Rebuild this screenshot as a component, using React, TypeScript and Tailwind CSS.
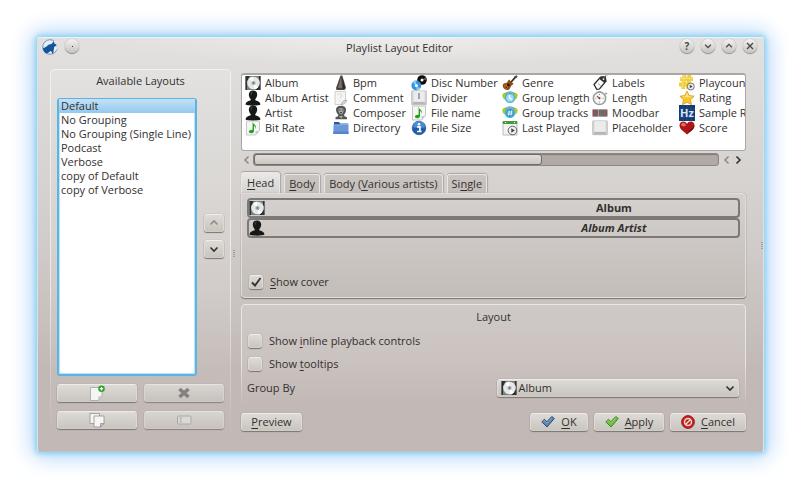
import { useState } from 'react';
import type { ReactNode } from 'react';

const layouts = ['Default', 'No Grouping', 'No Grouping (Single Line)', 'Podcast', 'Verbose', 'copy of Default', 'copy of Verbose'];

const raised = 'rounded-[3px] border border-t-[#efedeb] border-x-[#dedad7] border-b-[#d0ccc7] bg-linear-to-b from-[#dedbd7] to-[#c9c5bf] shadow-[0_1px_1px_#7b7572,0_0_1px_#8f8986]';

function Album() {
  return (
    <svg className="size-4 shrink-0" viewBox="0 0 16 16">
      <rect x=".5" y="1" width="15" height="14" fill="#7a8083" />
      <path d="M.5 1h4L2 7v8H.5zM15.500 15h-5l3.500-6V1h1.500z" fill="#2c3133" />
      <circle cx="8.500" cy="8" r="6.300" fill="#e6e7e7" />
      <path d="M8.500 8 4 3.600A6.200 6.200 0 0 1 8 1.800zM8.500 8l4.500 4.400a6 6 0 0 1-4 1.800z" fill="#fff" />
      <circle cx="8.500" cy="8" r="2.200" fill="#b4b8ba" />
      <circle cx="8.500" cy="8" r="1" fill="#6e7476" />
    </svg>
  );
}

function Person() {
  return (
    <svg className="size-4 shrink-0" viewBox="0 0 16 16">
      <path d="M8 .5c2.600 0 4.200 1.700 4.200 4 0 1.800-.8 3.600-1.900 4.500v1.300c1.500.6 4.800 1.200 5.200 4.200-2 1.500-13 1.500-15 0 .4-3 3.700-3.600 5.200-4.200V9C4.600 8.100 3.800 6.300 3.800 4.500c0-2.300 1.600-4 4.200-4z" fill="#161717" />
      <path d="M5.500 4c.2-1.600 1.200-2.300 2.600-2.300-1.300.7-1.800 2-1.600 4z" fill="#4b4e4f" />
    </svg>
  );
}

function NotePage() {
  return (
    <svg className="size-4 shrink-0" viewBox="0 0 16 16">
      <path d="M1.500 1h13v9.500L10.500 15h-9z" fill="#f6f6f5" stroke="#b9b9b7" strokeWidth=".8" />
      <path d="M10.500 15c.4-1.600.3-2.800 0-4 1.200.3 2.500.2 4-.5z" fill="#c5c5c3" />
      <path d="M7.600 1.800c.5 2.600 4.200 3.300 3.300 7-.3-1.700-1.100-2.500-1.900-2.800v5c0 2.900-5.400 3-5 .6.200-1.500 2.100-2.300 3.600-1.700z" fill="#1fa51c" />
    </svg>
  );
}

function Metronome() {
  return (
    <svg className="size-4 shrink-0" viewBox="0 0 16 16">
      <path d="M7.500.5h1.800L13 13l-1.500 2h-8L3 13z" fill="#4d4440" />
      <path d="M8 2 5 13h4z" fill="#77706c" />
      <path d="M9.500 3 12 13l-2 1z" fill="#2a2422" />
    </svg>
  );
}

function Comment() {
  return (
    <svg className="size-4 shrink-0" viewBox="0 0 16 16">
      <path d="M2 1.500h10.500v8L9 14.500H2z" fill="#f5f5f4" stroke="#c5c5c3" strokeWidth=".8" />
      <path d="M5 5c.5-1.500 3.800-1.500 3.800.4 0 1.300-1.800 1.500-1.800 3M7 10v1.200" fill="none" stroke="#dededd" strokeWidth="1.300" />
      <path d="M8.500 14.500c.6-2 1.500-4 5-4.500-.5 2.600-2 4.200-5 4.500z" fill="#e8e8e7" stroke="#8b8b89" strokeWidth=".7" />
    </svg>
  );
}

function Composer() {
  return (
    <svg className="size-4 shrink-0" viewBox="0 0 16 16">
      <path d="M3 4.500C3 2 5 .7 8 .7s5 1.500 5 4c0 2-.8 4-2 5l.5 1.500 2.500 1v2H2.500v-2l2.500-1 .3-1.500C4 8.500 3 6.500 3 4.500z" fill="#555756" />
      <path d="M5.500 4C7 2.500 10 3 10.500 4.500c.3 2.500-.7 4.200-2.300 5C6.500 9 5 7 5.500 4z" fill="#a4a7a6" />
      <path d="M6 5h1.500M8.700 5H10M7 7.500h2" stroke="#3e403f" strokeWidth=".9" />
      <path d="M6 11h4l-1.500 2.500z" fill="#a9abaa" />
    </svg>
  );
}

function Folder() {
  return (
    <svg className="size-4 shrink-0" viewBox="0 0 16 16">
      <path d="M1 2h5l1 1.500h8V7H1z" fill="#2c5a9f" />
      <path d="M.5 4.800H7L8 4h7.500v10H.3z" fill="#6a98d9" />
      <path d="M.3 11.500h15.200V14H.3z" fill="#5584c9" />
      <path d="M.5 5H7l1-.8h7.500" fill="none" stroke="#a4c4ee" strokeWidth=".8" />
    </svg>
  );
}

function Discs() {
  return (
    <svg className="size-4 shrink-0" viewBox="0 0 16 16">
      <circle cx="11" cy="5" r="4.800" fill="#0b0c0d" />
      <path d="M11 5 14.500 2A4.800 4.800 0 0 1 15.700 5z" fill="#55585a" />
      <circle cx="11" cy="5" r="1.500" fill="#fff" />
      <circle cx="5.300" cy="10.500" r="4.900" fill="#3594e0" />
      <path d="M5.300 10.500 1.500 7.400A4.900 4.900 0 0 1 5 5.600zM5.300 10.500l3.900 3a4.900 4.900 0 0 1-3.500 1.900z" fill="#86c7f7" />
      <circle cx="5.300" cy="10.500" r="1.500" fill="#fff" />
    </svg>
  );
}

function Key({ divider }: { divider?: boolean }) {
  return (
    <svg className="size-4 shrink-0" viewBox="0 0 16 16">
      <rect x=".5" y=".8" width="15" height="14" rx=".5" fill="#cfd1d1" stroke="#b9bbbb" strokeWidth=".6" />
      <rect x="2.300" y="1.300" width="11.400" height="10.500" rx=".5" fill="#ebecec" />
      <path d="M1 14.500 3 12h10l2 2.500z" fill="#b4b6b6" />
      {divider && <path d="M8 3v6" stroke="#747777" strokeWidth="1.200" />}
    </svg>
  );
}

function Info() {
  return (
    <svg className="size-4 shrink-0" viewBox="0 0 16 16">
      <circle cx="8" cy="8" r="6.800" fill="#1c5fad" stroke="#164a8a" strokeWidth=".6" />
      <path d="M2 7a6 6 0 0 1 12 0C11 8.500 5 8.500 2 7z" fill="#4b8dd4" />
      <path d="M6.200 6.800h2.700v4.500M6 11.500h4.600" fill="none" stroke="#fff" strokeWidth="1.700" />
      <circle cx="8" cy="4.300" r="1.300" fill="#fff" />
    </svg>
  );
}

function Guitar() {
  return (
    <svg className="size-4 shrink-0" viewBox="0 0 16 16">
      <path d="M7 9.500 13.500 2" stroke="#2f2620" strokeWidth="1.700" />
      <path d="m12 1.700 2.500-1.500 1.200 1.300-1.900 2.200z" fill="#5a4839" />
      <path d="M1 9.500C2 7.500 4 8.500 5 7.500s1.200-3 3-2.700C8 6.500 9.500 8 11.500 8c0 1.800-2 2-2.500 3.300-.6 1.700-1.500 3.700-4 3.700C2 15 0 12 1 9.500z" fill="#8b4c16" />
      <path d="M2 10c1.500-1.500 3-.5 4.300-2.400l1 2.900-2 3.500C3 14 2 12 2 10z" fill="#b06a20" />
      <circle cx="6.300" cy="10" r="1.400" fill="#23150b" />
      <path d="m3.500 11.500 1.500 1.700" stroke="#2d1a0b" />
    </svg>
  );
}

function Group({ tracks }: { tracks?: boolean }) {
  return (
    <svg className="size-4 shrink-0" viewBox="0 0 16 16">
      <path d="M.3 5.500C.3 3 3 2 5 2.500v8C2.500 10 .3 8 .3 5.500z" fill="#a7cd25" />
      <path d="M15.700 5.500c0-2.500-2.700-3.500-4.700-3v8c2.500-.5 4.700-2.500 4.700-5z" fill="#bfc327" />
      <circle cx="8" cy="7.800" r="5.300" fill="#4eb3df" />
      <circle cx="8" cy="8" r="3.700" fill={tracks ? '#2991c4' : '#a4dcf3'} />
      {tracks
        ? <path d="M7.300 5.500 6.500 10.500M9.700 5.500l-.8 5M5.500 7h5.300M5.200 9h5.300" stroke="#eefaff" strokeWidth=".9" />
        : <path d="M7.500 5v3l2.500 1.500" fill="none" stroke="#fff" strokeWidth="1.200" />}
      <path d="M4 3.500c1-2 7-2 8 0" fill="none" stroke="#2e86a8" />
    </svg>
  );
}

function LastPlayed() {
  return (
    <svg className="size-4 shrink-0" viewBox="0 0 16 16">
      <path d="M1 1.500h14V15H1z" fill="#f2f3f1" stroke="#a9aca8" strokeWidth=".8" />
      <path d="M.8 1h14.400v3H.8z" fill="#429843" />
      <path d="M3 2.500h1M12 2.500h1" stroke="#fff" />
      <circle cx="10.500" cy="10.500" r="4.300" fill="#efefed" stroke="#5e625f" />
      <path d="m9.300 8.300 3.500 2.200-3.500 2.200z" fill="#3e423f" />
    </svg>
  );
}

function Tag() {
  return (
    <svg className="size-4 shrink-0" viewBox="0 0 16 16">
      <path d="M2 9.500 8.500 2l4.700-.3L14 6l-6.500 8-2.700.4z" fill="#fafafa" stroke="#252727" strokeWidth="1.200" />
      <path d="m8.500 2 4.700-.5L14.200 6 12.500 8 7.300 4z" fill="#303333" />
      <circle cx="11.500" cy="4" r=".9" fill="#fff" />
      <path d="M11.500 4C12 1 14 0 15.500 1M6 8.500l2.500 2" fill="none" stroke="#8d908f" strokeWidth=".8" />
    </svg>
  );
}

function Stopwatch() {
  return (
    <svg className="size-4 shrink-0" viewBox="0 0 16 16">
      <path d="M6 1h3v2H6zM12.500 3.500l1.500-1.300 1.400 1.600L14 5z" fill="#a6a8a8" />
      <circle cx="7.500" cy="8.300" r="6.200" fill="#f6f6f6" stroke="#9b9d9d" strokeWidth="1.500" />
      <path d="M7.500 8.300 5 6" stroke="#c53a31" strokeWidth="1.100" />
      <path d="M7.500 4v1M7.500 11.600v1M3.300 8.300h1M10.700 8.300h1" stroke="#777" strokeWidth=".8" />
      <circle cx="7.500" cy="8.300" r="1" fill="#444" />
    </svg>
  );
}

function Moodbar() {
  return (
    <svg className="size-4 shrink-0" viewBox="0 0 16 16">
      <path d="M.5 4.500h15v7H.5z" fill="#6e6465" />
      <path d="M1.500 4.500v7M4 4.500v7" stroke="#9b4a4e" strokeWidth="1.200" />
      <path d="M6.500 4.500v7" stroke="#bf9794" />
      <path d="M8.700 4.500v7M11 4.500v7" stroke="#607b79" strokeWidth="1.200" />
      <path d="M13.300 4.500v7" stroke="#c34951" strokeWidth="1.300" />
    </svg>
  );
}

function Playcount() {
  return (
    <svg className="size-4 shrink-0" viewBox="0 0 16 16">
      <path d="M5.500 0 4 14M10.500 0 9 14M1 4.200h13M0 9.500h12" stroke="#f3cd3c" strokeWidth="3.800" />
      <path d="M5 0 3.500 13M1 3.500h12" stroke="#f9e074" />
      <circle cx="11.800" cy="11.500" r="3.500" fill="#ececea" stroke="#737573" />
      <path d="m10.800 9.700 2.800 1.800-2.800 1.800z" fill="#444" />
    </svg>
  );
}

function Star() {
  return (
    <svg className="size-4 shrink-0" viewBox="0 0 16 16">
      <path d="m8 1 2.200 4.600 5 .6-3.700 3.500 1 5L8 12.300l-4.500 2.400 1-5L.8 6.200l5-.6z" fill="#f7c52c" stroke="#d99a1b" strokeWidth=".8" strokeLinejoin="round" />
      <path d="m8 2.500 1.600 3.800 4 .5C10 7.500 6 7.500 2.500 6.800l4-.5z" fill="#fde681" />
    </svg>
  );
}

function Hertz() {
  return (
    <svg className="size-4 shrink-0" viewBox="0 0 16 16">
      <path d="M0 0h16v16H0z" fill="#143a70" />
      <path d="M0 4h16M0 8h16M0 12h16M4 0v16M8 0v16M12 0v16" stroke="#2c5a96" strokeWidth=".5" />
      <text x="8" y="12" textAnchor="middle" fontSize="11" fontWeight="700" fill="#d5e6fa">Hz</text>
    </svg>
  );
}

function Heart() {
  return (
    <svg className="size-4 shrink-0" viewBox="0 0 16 16">
      <path d="M8 14.500C5.500 12 .5 9.500.5 5.500.5 1 6 .3 8 4c2-3.700 7.500-3 7.500 1.500 0 4-5 6.500-7.500 9z" fill="#ae1516" />
      <path d="M2 5c.2-3 4-3.200 5 .2C5.500 6.700 3.500 7 2 5z" fill="#e16a62" />
      <path d="M8 14.500c2.500-2.500 7.500-5 7.500-9C13 9 10 10 8 14.500z" fill="#76090b" />
    </svg>
  );
}

const tokens: [string, ReactNode][] = [
  ['Album', <Album />], ['Album Artist', <Person />], ['Artist', <Person />], ['Bit Rate', <NotePage />],
  ['Bpm', <Metronome />], ['Comment', <Comment />], ['Composer', <Composer />], ['Directory', <Folder />],
  ['Disc Number', <Discs />], ['Divider', <Key divider />], ['File name', <NotePage />], ['File Size', <Info />],
  ['Genre', <Guitar />], ['Group length', <Group />], ['Group tracks', <Group tracks />], ['Last Played', <LastPlayed />],
  ['Labels', <Tag />], ['Length', <Stopwatch />], ['Moodbar', <Moodbar />], ['Placeholder', <Key />],
  ['Playcount', <Playcount />], ['Rating', <Star />], ['Sample Rate', <Hertz />], ['Score', <Heart />],
];

const tabs: [string, ReactNode][] = [
  ['head', <><Accel>H</Accel>ead</>],
  ['body', <><Accel>B</Accel>ody</>],
  ['various', <>Body (<Accel>V</Accel>arious artists)</>],
  ['single', <>Si<Accel>n</Accel>gle</>],
];

// underlined accelerator letter
function Accel({ children }: { children: ReactNode }) {
  return <span className="underline decoration-[#33302e] decoration-1 underline-offset-2 [text-decoration-skip-ink:none]">{children}</span>;
}

function Chevron({ dir, className }: { dir: 'up' | 'down' | 'left' | 'right'; className?: string }) {
  const paths = { up: 'M1.500 6.500 5 3l3.500 3.500', down: 'M1.500 3.500 5 7l3.500-3.500', left: 'M6.500 1.500 3 5l3.500 3.500', right: 'M3.500 1.500 7 5 3.500 8.500' };
  return (
    <svg className={className ?? 'size-[10px]'} viewBox="0 0 10 10" fill="none" stroke="currentColor" strokeWidth="1.600">
      <path d={paths[dir]} />
    </svg>
  );
}

function Frame({ className, children }: { className: string; children: ReactNode }) {
  return (
    <section className={`relative ${className}`}>
      <div className="pointer-events-none absolute inset-0 rounded-t-[4px] border border-b-0 border-white/55 bg-white/12 shadow-[0_0_1px_1px_#00000030] mask-b-from-60%" />
      {children}
    </section>
  );
}

function TitleButton({ label, children }: { label: string; children?: ReactNode }) {
  return (
    <button aria-label={label} className="flex size-[14px] items-center justify-center rounded-full bg-linear-to-b from-[#f4f3f2] to-[#c6c3bf] text-[#4a4846] shadow-[0_1px_1px_#8d8985,0_0_1px_#8d8985]">
      {children}
    </button>
  );
}

function Check({ checked, children }: { checked?: boolean; children: ReactNode }) {
  return (
    <label className="flex items-center gap-[6px]">
      <span className="grid size-4 place-items-center *:col-start-1 *:row-start-1">
        <input type="checkbox" defaultChecked={checked} className={`peer size-[14px] appearance-none ${raised}`} />
        <svg className="pointer-events-none hidden size-[14px] peer-checked:block" viewBox="0 0 14 14" fill="none" stroke="#33312f" strokeWidth="1.800">
          <path d="m3 7.500 3 3L11.500 3" />
        </svg>
      </span>
      {children}
    </label>
  );
}

function DialogButton({ icon, className, children }: { icon?: ReactNode; className: string; children: ReactNode }) {
  return (
    <button className={`flex h-[18px] items-center justify-center ${raised} ${className}`}>
      {icon}
      <span>{children}</span>
    </button>
  );
}

function Tick({ fill, stroke }: { fill: string; stroke: string }) {
  return (
    <svg className="size-[14px]" viewBox="0 0 14 14">
      <path d="M.8 6.800 3.500 4.300l2.300 2.500 5-5.300 2.500 2L6 12z" fill={fill} stroke={stroke} strokeWidth="1" strokeLinejoin="round" />
      <path d="m2 6.700 1.500-1.200L5.800 8l5-5.200" fill="none" stroke="#ffffff40" />
    </svg>
  );
}

function Grip() {
  return (
    <div className="flex flex-col gap-px">
      <span className="h-px w-[2px] bg-[#a19c99]" />
      <span className="h-px w-[2px] bg-[#a19c99]" />
      <span className="h-px w-[2px] bg-[#a19c99]" />
      <span className="h-px w-[2px] bg-[#a19c99]" />
    </div>
  );
}

export default function App() {
  const [layout, setLayout] = useState('Default');
  const [tab, setTab] = useState('head');

  return (
    <main className="min-h-screen bg-white p-[37px] pr-9 font-['Open_Sans','Noto_Sans',sans-serif] text-[11px] leading-[14px] text-[#33302e]">
      <div className="rounded-[3px] border border-t-[#e9f3f8] border-x-[#d8e3e8] border-b-[#b9c3c8] bg-linear-to-b from-[#e2e1df] via-[#d0ccc9] via-50% to-[#c2b9b6] to-80% shadow-[0_0_5px_2px_#8dd2f2,0_0_22px_5px_#b1d3f8]">
        <header className="flex h-[31px] items-start gap-[7px] bg-radial-[at_50%_0%] from-white/40 to-transparent to-60% pt-px pr-[6px] pl-1">
          <svg className="size-4" viewBox="0 0 16 16">
            <circle cx="8" cy="8" r="7.300" fill="#e6eef7" stroke="#7195bd" />
            <path d="M1 9c3-.5 4-2.500 6-3.500L9.500 5 12 2l.3 2.500L15 6c-1 1.500-2.500 1-3 2.500 0 2-.5 4-1 6.500-1-.5-1-2-2-3-1.500.5-3 2.500-5 2.500C2 13 1 11 1 9z" fill="#16549b" />
            <path d="M12 2c3 1.500 4 5 2.500 8.500" fill="none" stroke="#fff" />
          </svg>
          <TitleButton label="Window menu"><span className="size-px bg-[#333]" /></TitleButton>
          <h1 className="flex-1 pt-[2px] pl-10 text-center">Playlist Layout Editor</h1>
          <TitleButton label="Help"><span className="text-[10px] leading-none font-bold">?</span></TitleButton>
          <TitleButton label="Minimize"><Chevron dir="down" className="size-2" /></TitleButton>
          <TitleButton label="Maximize"><Chevron dir="up" className="size-2" /></TitleButton>
          <TitleButton label="Close">
            <svg className="size-2" viewBox="0 0 8 8" stroke="currentColor" strokeWidth="1.400"><path d="m1 1 6 6M7 1 1 7" /></svg>
          </TitleButton>
        </header>

        <div className="flex pb-[13px] pl-3">
          <Frame className="flex w-[181px] shrink-0 flex-col px-[7px] pb-[9px]">
            <h2 className="relative h-[29px] pt-[5px] text-center">Available Layouts</h2>
            <div className="relative flex flex-1">
              <ul role="listbox" aria-label="Available Layouts" className="w-[140px] rounded-[3px] border-2 border-t border-[#5db4e2] bg-white shadow-[inset_0_0_1px_1px_#b5e0f5]">
                {layouts.map((name) => (
                  <li key={name} role="option" aria-selected={name === layout}>
                    <button
                      onClick={() => setLayout(name)}
                      className={`block h-[14px] w-full px-[2px] text-left whitespace-nowrap ${name === layout ? 'bg-linear-to-b from-[#c5e1f6] to-[#93c9ee]' : ''}`}
                    >
                      {name}
                    </button>
                  </li>
                ))}
              </ul>
              <div className="ml-[7px] flex flex-col justify-center gap-2 pb-[2px]">
                <button aria-label="Move up" disabled className={`flex h-[18px] w-5 items-center justify-center text-[#8f8b87] ${raised}`}><Chevron dir="up" /></button>
                <button aria-label="Move down" className={`flex h-[18px] w-5 items-center justify-center ${raised}`}><Chevron dir="down" /></button>
              </div>
            </div>
            <div className="relative mt-2 grid grid-cols-2 gap-x-[7px] gap-y-[9px]">
              <button aria-label="New layout" className={`flex h-[18px] items-center justify-center ${raised}`}>
                <svg className="size-4" viewBox="0 0 16 16">
                  <path d="M1.500 2.500H13v8L9 15.500H1.500z" fill="#f5f5f4" stroke="#a5a3a0" strokeWidth=".8" />
                  <path d="M9 15.500c.5-2 .5-3 0-4 1.500.3 2.700 0 4-1z" fill="#c8c8c6" />
                  <circle cx="12.500" cy="3.700" r="3.300" fill="#27a821" />
                  <path d="M12.500 2v3.400M10.800 3.700h3.400" stroke="#fff" strokeWidth="1.300" />
                </svg>
              </button>
              <button aria-label="Delete layout" disabled className={`flex h-[18px] items-center justify-center opacity-80 ${raised}`}>
                <svg className="size-3" viewBox="0 0 12 12" stroke="#75726f" strokeWidth="3.600"><path d="m1.500 2 9 8M10.500 2l-9 8" /></svg>
              </button>
              <button aria-label="Copy layout" className={`flex h-[18px] items-center justify-center ${raised}`}>
                <svg className="size-4" viewBox="0 0 16 16" fill="#f5f5f4" stroke="#94918e" strokeWidth=".8">
                  <path d="M1 1.500h9.500v10H1z" />
                  <path d="M5 4h10v7.500L11.500 15H5z" />
                  <path d="M11.500 15v-3.500H15z" fill="#c8c8c6" />
                </svg>
              </button>
              <button aria-label="Rename layout" disabled className={`flex h-[18px] items-center justify-center opacity-80 ${raised}`}>
                <svg className="size-4" viewBox="0 0 16 16">
                  <rect x="1.500" y="4" width="13.500" height="8" rx="1" fill="#e2e0de" stroke="#a7a4a1" />
                  <path d="M3.500 6h2.500M4.700 6v4M3.500 10h2.500" stroke="#a7a4a1" strokeWidth=".8" />
                </svg>
              </button>
            </div>
          </Frame>

          <div className="flex w-[10px] shrink-0 items-center justify-start pl-[2px]"><Grip /></div>

          <div className="flex min-w-0 flex-1 flex-col pt-1 pb-[7px]">
            <ul className="grid h-[78px] grid-flow-col grid-cols-[88px_78px_91px_90px_87px_90px] grid-rows-[repeat(4,15px)] overflow-hidden rounded-[3px] border border-t-2 border-[#aaa6a3] bg-white pl-[3px]">
              {tokens.map(([name, icon]) => (
                <li key={name} className="flex items-center gap-1 whitespace-nowrap">{icon}{name}</li>
              ))}
            </ul>
            <div className="mt-[2px] flex h-[13px] items-center">
              <button aria-label="Scroll left" className="flex w-3 justify-center text-[#8f8b88]"><Chevron dir="left" /></button>
              <div className="h-[13px] flex-1 rounded-[3px] border border-[#8e8885] bg-[#b0a9a6] shadow-[inset_0_1px_1px_#817b78]">
                <div className="h-[11px] w-[62%] rounded-[3px] border border-[#6f6a68] bg-linear-to-b from-[#e0dedb] to-[#cbc7c2]" />
              </div>
              <button aria-label="Scroll back" className="ml-[3px] flex w-[10px] justify-center text-[#8f8b88]"><Chevron dir="left" /></button>
              <button aria-label="Scroll right" className="mr-[2px] flex w-3 justify-center"><Chevron dir="right" /></button>
            </div>

            <div role="tablist" className="mt-[6px] flex h-[21px] items-end gap-1">
              {tabs.map(([id, label]) => (
                <button
                  key={id}
                  role="tab"
                  aria-selected={id === tab}
                  onClick={() => setTab(id)}
                  className={`rounded-t-[3px] border border-b-0 border-[#e9e7e4] whitespace-nowrap shadow-[0_-1px_1px_#aaa5a2,1px_0_1px_#aaa5a2] ${id === tab ? 'h-[21px] bg-linear-to-b from-[#eae9e7] to-[#d5d1ce] px-[5px]' : 'h-[19px] bg-linear-to-b from-[#cbc5c2] to-[#c3bebb] px-1'}`}
                >
                  {label}
                </button>
              ))}
            </div>
            <div role="tabpanel" className="flex h-[105px] flex-col rounded-[4px] rounded-tl-none border border-[#e0dddb] bg-linear-to-b from-[#d5d1ce] to-[#c3bdb9] px-[5px] pt-1 pb-[7px] shadow-[0_1px_1px_#7c7774,0_0_1px_#8f8986]">
              <div className="flex h-5 items-center rounded-[4px] border-2 border-[#7f7976] font-bold">
                <Album />
                <span className="w-[46%]" />
                <span className="flex-1 text-center">Album</span>
              </div>
              <div className="flex h-5 items-center rounded-[4px] border-2 border-[#7f7976] font-bold italic">
                <Person />
                <span className="w-[46%]" />
                <span className="flex-1 text-center">Album Artist</span>
              </div>
              <div className="mt-auto pl-px"><Check checked><span><Accel>S</Accel>how cover</span></Check></div>
            </div>

            <Frame className="mt-[6px] flex h-[103px] flex-col px-[6px]">
              <h2 className="relative pt-[6px] text-center">Layout</h2>
              <div className="relative mt-[9px] flex flex-col gap-[7px]">
                <Check><span>Show <Accel>i</Accel>nline playback controls</span></Check>
                <Check><span>Show <Accel>t</Accel>ooltips</span></Check>
              </div>
              <div className="relative mt-[7px] flex items-center justify-between">
                <label htmlFor="group-by">Group By</label>
                <div className="mr-px grid w-[49%] items-center *:col-start-1 *:row-start-1">
                  <select id="group-by" className={`h-[18px] w-full appearance-none pl-5 ${raised}`}>
                    <option>Album</option>
                    <option>Artist</option>
                    <option>Composer</option>
                  </select>
                  <span className="pointer-events-none flex items-center justify-between pr-1 pl-1"><Album /><Chevron dir="down" /></span>
                </div>
              </div>
            </Frame>

            <footer className="mt-[6px] flex gap-[6px]">
              <DialogButton className="w-[61px]"><Accel>P</Accel>review</DialogButton>
              <span className="flex-1" />
              <DialogButton className="w-[58px] gap-[6px]" icon={<Tick fill="#5f86b0" stroke="#2e4b70" />}><Accel>O</Accel>K</DialogButton>
              <DialogButton className="w-[70px] gap-[6px]" icon={<Tick fill="#71c043" stroke="#3c8a20" />}><Accel>A</Accel>pply</DialogButton>
              <DialogButton
                className="w-[76px] gap-[6px]"
                icon={
                  <svg className="size-[14px]" viewBox="0 0 14 14">
                    <circle cx="7" cy="7" r="6.400" fill="#c41e1b" stroke="#8d0f0d" strokeWidth=".8" />
                    <circle cx="7" cy="7" r="3.500" fill="none" stroke="#f0d8d6" strokeWidth="1.500" />
                    <path d="m4.500 9.500 5-5" stroke="#f0d8d6" strokeWidth="1.500" />
                  </svg>
                }
              >
                <Accel>C</Accel>ancel
              </DialogButton>
            </footer>
          </div>

          <div className="flex w-[17px] shrink-0 items-center justify-end pb-4"><Grip /></div>
        </div>
      </div>
    </main>
  );
}
